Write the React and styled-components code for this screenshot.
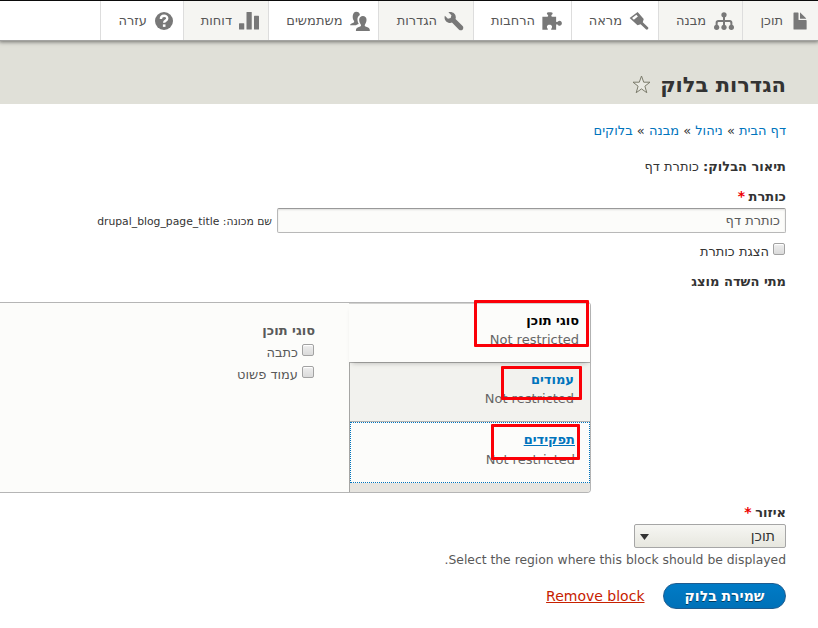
import React from 'react';
import styled, { createGlobalStyle, css } from 'styled-components';

const Global = createGlobalStyle`
  *, *::before, *::after { box-sizing: border-box; }
  body { margin: 0; background: #fff; color: #333; font: 13px/20px "DejaVu Sans", sans-serif; }
`;

const Page = styled.div`
  width: 818px;
  height: 628px;
  overflow: hidden;
  direction: rtl;
`;

const Toolbar = styled.nav`
  position: relative;
  display: flex;
  height: 41px;
  border-top: 1px solid #0b0b0b;
  border-bottom: 1px solid #a3a3a1;
  background: #fff;
  box-shadow: 0 0 4px 1px rgba(0, 0, 0, 0.5);
`;

const MenuItem = styled.a`
  display: flex;
  align-items: center;
  gap: ${(p) => p.$gap ?? 8}px;
  width: ${(p) => p.$width}px;
  padding-right: ${(p) => p.$pad ?? 9}px;
  border-left: 1px solid #ddd;
  background: ${(p) => (p.$shaded ? '#f5f5f2' : '#fff')};
  color: #565656;
  font-size: 13px;
  white-space: nowrap;
`;

const MenuIcon = styled.svg`
  flex: none;
  width: 20px;
  height: 20px;
  fill: #787878;
`;

const Header = styled.header`
  display: flex;
  align-items: center;
  gap: 9px;
  height: 63px;
  padding: 24px 32px 0 0;
  background: #e0e0d8;
`;

const Title = styled.h1`
  margin: 0;
  font-size: 21px;
  line-height: 28px;
  font-weight: bold;
`;

const Star = styled.svg`
  width: 19px;
  height: 19px;
  margin-top: -1px;
  fill: #e9e9e2;
  stroke: #7b7b6b;
`;

const Breadcrumb = styled.nav`
  height: 20px;
  margin: 17px 32px 0 0;
  line-height: 20px;
`;

const Crumb = styled.a`
  color: #0074bd;
`;

const Line = styled.div`
  height: 20px;
  margin: ${(p) => p.$top}px ${(p) => p.$right ?? 32}px 0 0;
  font-size: ${(p) => p.$size ?? 13}px;
  line-height: 20px;
  font-weight: ${(p) => (p.$bold ? 'bold' : 'normal')};
  color: ${(p) => p.$color ?? '#333'};
`;

const Required = styled.span`
  margin-right: -1px;
  color: #e00;
  font-size: 14px;
  line-height: 1;
`;

const TitleRow = styled.div`
  display: flex;
  align-items: center;
  gap: 5px;
  height: 25px;
  margin: 1px 32px 0 0;
`;

const TextInput = styled.input`
  width: 509px;
  height: 25px;
  padding: 0 5px;
  border: 1px solid #b8b8b8;
  border-top-color: #999;
  border-radius: 2px;
  background: #fcfcfa;
  box-shadow: inset 0 1px 2px rgba(0, 0, 0, 0.125);
  color: #595959;
  font: 13px "DejaVu Sans", sans-serif;
`;

const MachineName = styled.span`
  padding-top: 2px;
  font-size: 10.8px;
  white-space: nowrap;
`;

const CheckLine = styled.label`
  display: flex;
  align-items: center;
  gap: 4px;
  height: 20px;
  margin: ${(p) => p.$top}px ${(p) => p.$right}px 0 0;
  color: ${(p) => p.$color ?? '#333'};
`;

const Check = styled.input`
  appearance: none;
  width: 12px;
  height: 12px;
  margin: -6px 0 0;
  border: 1px solid #a2a2a2;
  border-radius: 2px;
  background: linear-gradient(#eee, #dadada);
  box-shadow: inset 0 1px 1px #fff;
`;

const Tabs = styled.section`
  position: relative;
  display: flex;
  width: 591px;
  height: 191px;
  margin: 10px 227px 0 0;
  border: 1px solid #b5b5b5;
  border-left: 0;
  border-radius: 0 4px 4px 0;
  background: #fcfcfa;
`;

const TabMenu = styled.ul`
  width: 241px;
  margin: 0;
  padding: 0;
  border-left: 1px solid #a6a6a4;
  border-bottom-right-radius: 3px;
  background: #e6e4df;
  list-style: none;
`;

const tabKinds = {
  selected: css`
    position: relative;
    width: 241px;
    height: 59px;
    padding: 7px 11px 0 0;
    border-top: 1px solid #d2d2d0;
    background: #fcfcfa;
    box-shadow: 0 4px 5px -3px rgba(0, 0, 0, 0.25);
  `,
  plain: css`
    height: 60px;
    padding: 7px 16px 0 0;
    border-top: 1px solid #b1b1af;
    border-bottom: 1px solid #b1b1af;
    background: #f2f2ee;
  `,
  focused: css`
    height: 61px;
    padding: 7px 14px 0 0;
    border: 1px dotted #0074bd;
    background: #fcfcfa;
  `,
};

const Tab = styled.li`
  ${(p) => tabKinds[p.$kind]}
`;

const TabTitle = styled.strong`
  display: block;
  height: ${(p) => (p.$underline ? 20 : 19)}px;
  color: ${(p) => (p.$selected ? '#000' : '#0074bd')};
  line-height: 19px;
  text-decoration: ${(p) => (p.$underline ? 'underline' : 'none')};
`;

const Summary = styled.span`
  display: block;
  color: #666;
  line-height: 19px;
`;

const Pane = styled.div`
  flex: 1;
  padding-top: 18px;
`;

const Mark = styled.div`
  position: absolute;
  left: ${(p) => p.$x}px;
  top: ${(p) => p.$y}px;
  width: ${(p) => p.$w}px;
  height: ${(p) => p.$h}px;
  border: 3px solid #fb0007;
  border-radius: 1px;
`;

const Select = styled.div`
  display: flex;
  align-items: center;
  justify-content: space-between;
  width: 152px;
  height: 24px;
  margin: 1px 32px 0 0;
  padding: 0 10px 0 5px;
  border: 1px solid #a6a6a6;
  border-radius: 2px;
  background: linear-gradient(#f6f6f3, #e7e7df);
  font-size: 14px;
`;

const Arrow = styled.svg`
  width: 9px;
  height: 6px;
  margin-top: 1px;
  fill: #333;
`;

const Actions = styled.div`
  display: flex;
  align-items: center;
  gap: 18.5px;
  margin: 13px 32px 0 0;
`;

const Save = styled.button`
  width: 123px;
  height: 26px;
  padding: 0;
  border: 1px solid #1e5c90;
  border-radius: 20px;
  background: linear-gradient(#007bc6, #0071b8);
  color: #fff;
  font: bold 14px/22px "DejaVu Sans", sans-serif;
  text-shadow: 0 1px rgba(0, 0, 0, 0.5);
`;

const Remove = styled.a`
  color: #c72100;
  font-size: 14px;
  text-decoration: underline;
`;

const icons = {
  file: (
    <path d="M12.3 7.200h-5a.5.5 0 0 1-.5-.5v-5a.5.5 0 0 0-.5-.5h-3a.5.5 0 0 0-.5.5v12.600a.5.5 0 0 0 .5.5h9.500a.5.5 0 0 0 .5-.5v-6.600a.5.5 0 0 0-.5-.5zM8.500 6.200h4.200c.28 0 .34-.16.15-.35L8.350 1.350C8.160 1.160 8 1.220 8 1.500v4.200c0 .28.220.5.5.5z" />
  ),
  structure: (
    <g>
      <circle cx="8" cy="3" r="2.1" />
      <circle cx="2.1" cy="13" r="2.1" />
      <circle cx="8" cy="13" r="2.1" />
      <circle cx="13.9" cy="13" r="2.1" />
      <path d="M7.2 4h1.600v8H7.200zM1.300 12V9.200c0-1.200.9-2 2-2h9.400c1.100 0 2 .8 2 2V12h-1.600V9.500c0-.5-.3-.7-.7-.7H3.600c-.4 0-.7.2-.7.7V12z" />
    </g>
  ),
  brush: (
    <path
      fillRule="evenodd"
      d="M6.900.8 11.800 6.300 11 9 15.200 12.900c1 1.100-.6 2.700-1.700 1.700L9.300 10.500l-2.500.9L.5 5.500zM5.900 3 2.400 5.500l1.500 1.500 3.200-2.600z"
    />
  ),
  puzzle: (
    <path d="M.3 4.500h3.900c.8 0 .7-.6.7-1.100 0-.5-1-.7-1-1.500C3.900 1.200 4.700 1 6.200 1s2.300.2 2.300.9c0 .8-1 1-1 1.500 0 .5-.1 1.100.7 1.100H11.300v3.600c0 .8.500.9 1 .6.500-.4.800-1 1.700-1 1.100 0 1.900.8 1.900 2s-.8 2-1.900 2c-.9 0-1.200-.6-1.700-1-.5-.3-1-.2-1 .6V15H7.800c-.6 0-.6-.7-.2-1.100 1-1.100.3-2.900-1.600-2.900s-2.600 1.800-1.600 2.900c.4.400.4 1.100-.2 1.100H.3z" />
  ),
  wrench: (
    <path d="M14.9 12.086 9.200 6.420c.15-.449.252-.921.252-1.421 0-2.485-2.016-4.200-4.502-4.200-.505 0-.981.102-1.434.255l2.431 2.431-.588 2.196-2.196.588L.718 3.824C.556 4.288.45 4.600.45 5.100c0 2.486 2.014 4.400 4.500 4.400.5 0 .972-.102 1.421-.251l5.667 5.665c.781.781 2.047.781 2.828 0s.781-2.047 0-2.828z" />
  ),
  people: (
    <g>
      <path d="M.1 11.300c0-1 1.200-1.500 2.600-1.900.9-.3.700-1.300.3-1.800C1.600 5.900 1.800.6 5 .6c1.800 0 2.700 1 2.900 2.500-1.600.8-2.100 2.300-1.900 4.300.1 1.200.5 2.100 1 2.900-.9.300-1.700.6-2.200 1z" />
      <path d="M4.700 15.900c-.1-2.200 1-2.900 3.500-3.600.9-.3.700-1.400.2-2C6.800 8.300 6.800 4 10.300 4s3.500 4.300 1.900 6.300c-.5.6-.7 1.700.2 2 2.500.7 3.600 1.400 3.500 3.600z" />
    </g>
  ),
  bars: (
    <g>
      <rect y="9.700" width="4.200" height="5" rx=".4" />
      <rect x="6" y=".7" width="4.200" height="14" rx=".4" />
      <rect x="12" y="3.700" width="4" height="11" rx=".4" />
    </g>
  ),
  help: (
    <g>
      <circle cx="8" cy="8" r="7.200" />
      <path d="M5.500 6.400c0-3.500 5.100-3.400 5.100-.4 0 1.800-2.500 1.600-2.500 3.400" fill="none" stroke="#fff" strokeWidth="1.900" />
      <rect x="7.100" y="10.700" width="2.100" height="2" fill="#fff" />
    </g>
  ),
};

const menu = [
  { icon: 'file', label: 'תוכן', width: 76, shaded: true, gap: 7, pad: 8 },
  { icon: 'structure', label: 'מבנה', width: 84, shaded: true, gap: 8, pad: 8 },
  { icon: 'brush', label: 'מראה', width: 87, gap: 7 },
  { icon: 'puzzle', label: 'הרחבות', width: 98, gap: 7 },
  { icon: 'wrench', label: 'הגדרות', width: 95, shaded: true, gap: 7 },
  { icon: 'people', label: 'משתמשים', width: 110, gap: 7.5, pad: 8 },
  { icon: 'bars', label: 'דוחות', width: 85, shaded: true, gap: 7 },
  { icon: 'help', label: 'עזרה', width: 83, gap: 7 },
];

const crumbs = ['דף הבית', 'ניהול', 'מבנה', 'בלוקים'];

export default function App() {
  return (
    <Page>
      <Global />
      <Toolbar>
        {menu.map((m) => (
          <MenuItem key={m.icon} $width={m.width} $shaded={m.shaded} $gap={m.gap} $pad={m.pad}>
            <MenuIcon viewBox="0 0 16 16">{icons[m.icon]}</MenuIcon>
            {m.label}
          </MenuItem>
        ))}
      </Toolbar>
      <Header>
        <Title>הגדרות בלוק</Title>
        <Star viewBox="0 0 19 19">
          <path d="M9.500 1 11.700 7.200H18L12.900 11.200 14.800 17.700 9.500 13.900 4.200 17.700 6.100 11.200 1 7.200H7.300Z" strokeLinejoin="round" />
        </Star>
      </Header>
      <Breadcrumb>
        {crumbs.map((c, i) => (
          <React.Fragment key={c}>
            {i > 0 && ' » '}
            <Crumb>{c}</Crumb>
          </React.Fragment>
        ))}
      </Breadcrumb>
      <Line $top={16}>
        <b>תיאור הבלוק:</b> כותרת דף
      </Line>
      <Line $top={10} $bold>
        כותרת <Required>*</Required>
      </Line>
      <TitleRow>
        <TextInput defaultValue="כותרת דף" />
        <MachineName>שם מכונה: drupal_blog_page_title</MachineName>
      </TitleRow>
      <CheckLine $top={9} $right={33}>
        <Check type="checkbox" />
        הצגת כותרת
      </CheckLine>
      <Line $top={10} $bold>
        מתי השדה מוצג
      </Line>
      <Tabs>
        <TabMenu>
          <Tab $kind="selected">
            <TabTitle $selected>סוגי תוכן</TabTitle>
            <Summary>Not restricted</Summary>
          </Tab>
          <Tab $kind="plain">
            <TabTitle>עמודים</TabTitle>
            <Summary>Not restricted</Summary>
          </Tab>
          <Tab $kind="focused">
            <TabTitle $underline>תפקידים</TabTitle>
            <Summary>Not restricted</Summary>
          </Tab>
        </TabMenu>
        <Pane>
          <Line $top={0} $right={34} $bold $color="#595959">
            סוגי תוכן
          </Line>
          <CheckLine $top={2} $right={35} $color="#595959">
            <Check type="checkbox" />
            כתבה
          </CheckLine>
          <CheckLine $top={2} $right={35} $color="#595959">
            <Check type="checkbox" />
            עמוד פשוט
          </CheckLine>
        </Pane>
        <Mark $x={474} $y={-3} $w={115} $h={47} />
        <Mark $x={501} $y={63} $w={81} $h={34} />
        <Mark $x={491} $y={121} $w={89} $h={36} />
      </Tabs>
      <Line $top={10} $bold>
        איזור <Required>*</Required>
      </Line>
      <Select>
        תוכן
        <Arrow viewBox="0 0 9 6">
          <path d="M0 0h9L4.500 6z" />
        </Arrow>
      </Select>
      <Line $top={2} $size={12.35} $color="#595959">
        Select the region where this block should be displayed.
      </Line>
      <Actions>
        <Save>שמירת בלוק</Save>
        <Remove>Remove block</Remove>
      </Actions>
    </Page>
  );
}
